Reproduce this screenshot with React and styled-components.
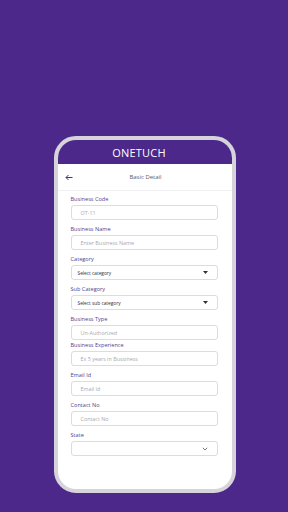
import React from 'react'
import styled, { createGlobalStyle } from 'styled-components'

const GlobalStyle = createGlobalStyle`
  html, body {
    margin: 0;
    padding: 0;
    background: #4b2889;
  }
  body {
    font-family: "Open Sans", "Liberation Sans", sans-serif;
  }
`

const fields = [
  { label: 'Business Code', placeholder: 'OT-11' },
  { label: 'Business Name', placeholder: 'Enter Business Name' },
  { label: 'Category', select: 'Select category', caret: 'triangle' },
  { label: 'Sub Category', select: 'Select sub category', caret: 'triangle' },
  { label: 'Business Type', placeholder: 'Un-Authorized', tight: true },
  { label: 'Business Experience', placeholder: 'Ex 5 years in Bussiness' },
  { label: 'Email Id', placeholder: 'Email Id' },
  { label: 'Contact No', placeholder: 'Contact No' },
  { label: 'State', select: '', caret: 'chevron' },
]

const Triangle = () => (
  <svg width="5" height="3" viewBox="0 0 5 3">
    <path d="M0 0 L5 0 L2.5 3 Z" fill="#333" />
  </svg>
)

const Chevron = () => (
  <svg width="6" height="4" viewBox="0 0 6 4">
    <path d="M0.8 0.8 L3 3 L5.2 0.8" fill="none" stroke="#555" strokeWidth="0.8" />
  </svg>
)

const BackArrow = () => (
  <svg width="8" height="7" viewBox="0 0 8 7">
    <path d="M7.5 3.5 H1 M3.5 1 L1 3.5 L3.5 6" fill="none" stroke="#4b2889" strokeWidth="1" />
  </svg>
)

const App = () => (
  <Page>
    <GlobalStyle />
    <Phone>
      <Header>ONETUCH</Header>
      <Screen>
        <TopBar>
          <BackButton><BackArrow /></BackButton>
          <Title>Basic Detail</Title>
        </TopBar>
        <Form>
          {fields.map(f => (
            <Field key={f.label} $tight={f.tight}>
              <Label>{f.label}</Label>
              {f.select !== undefined ? (
                <Select>
                  <span>{f.select}</span>
                  {f.caret === 'triangle' ? <Triangle /> : <Chevron />}
                </Select>
              ) : (
                <Input>{f.placeholder}</Input>
              )}
            </Field>
          ))}
        </Form>
      </Screen>
    </Phone>
  </Page>
)

const Page = styled.div`
  width: 288px;
  height: 512px;
  box-sizing: border-box;
  padding-top: 136px;
  display: flex;
  flex-direction: column;
  align-items: center;
  overflow: hidden;
`

const Phone = styled.div`
  width: 182px;
  height: 357px;
  margin-left: 1px;
  box-sizing: border-box;
  border: 4px solid #d6d4da;
  border-radius: 22px;
  background: #fff;
  overflow: hidden;
  display: flex;
  flex-direction: column;
`

const Header = styled.div`
  height: 24px;
  flex-shrink: 0;
  background: #4b2889;
  color: #fff;
  font-family: "Open Sans", sans-serif;
  font-weight: 500;
  font-size: 11px;
  letter-spacing: 0.2px;
  display: flex;
  align-items: center;
  justify-content: center;
  padding-right: 11px;
`

const Screen = styled.div`
  flex: 1;
  display: flex;
  flex-direction: column;
`

const TopBar = styled.div`
  height: 26px;
  flex-shrink: 0;
  position: relative;
  display: flex;
  align-items: center;
  justify-content: center;
  border-bottom: 1px solid #f0eff2;
`

const BackButton = styled.div`
  position: absolute;
  left: 7px;
  top: 10px;
  display: flex;
`

const Title = styled.div`
  font-family: "Open Sans", sans-serif;
  font-size: 6px;
  color: #5c5872;
  padding-left: 2px;
`

const Form = styled.div`
  padding: 4px 14px 0 13px;
  display: flex;
  flex-direction: column;
`

const Field = styled.div`
  display: flex;
  flex-direction: column;
  margin-bottom: ${p => (p.$tight ? '1px' : '5px')};
`

const Label = styled.div`
  font-family: "Open Sans", sans-serif;
  font-size: 5.6px;
  line-height: 8px;
  height: 8px;
  color: #4f3f8c;
  margin-bottom: 2px;
`

const Box = styled.div`
  height: 15px;
  box-sizing: border-box;
  border: 1px solid #dcdbe0;
  border-radius: 3px;
  display: flex;
  align-items: center;
  font-family: "Open Sans", sans-serif;
`

const Input = styled(Box)`
  padding-left: 9px;
  font-size: 5.4px;
  color: #a9a8b0;
`

const Select = styled(Box)`
  padding: 0 9px 0 6px;
  justify-content: space-between;
  font-size: 4.8px;
  color: #2d2d3a;
`

export default App
